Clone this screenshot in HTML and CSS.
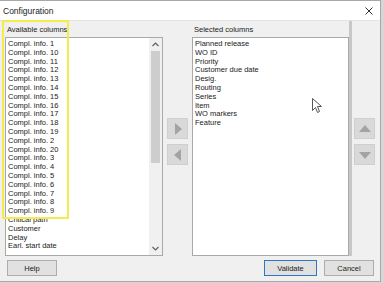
FILE: index.html
```html
<!DOCTYPE html>
<html lang="en">
<head>
    <meta charset="UTF-8">
    <title>Configuration</title>
    <link rel="stylesheet" href="styles.css">
</head>
<body>

<div class="dialog">
    <div class="titlebar">
        <span class="title">Configuration</span>
        <svg class="close" width="8" height="8" viewBox="0 0 8 8"><path d="M0.5 0.5 L7.5 7.5 M7.5 0.5 L0.5 7.5" stroke="#333" stroke-width="1"/></svg>
    </div>

    <div class="content">
        <div class="panes">
            <div class="pane left-pane">
                <div class="label">Available columns</div>
                <div class="listbox">
                    <ul class="items">
                        <li>Compl. info. 1</li>
                        <li>Compl. info. 10</li>
                        <li>Compl. info. 11</li>
                        <li>Compl. info. 12</li>
                        <li>Compl. info. 13</li>
                        <li>Compl. info. 14</li>
                        <li>Compl. info. 15</li>
                        <li>Compl. info. 16</li>
                        <li>Compl. info. 17</li>
                        <li>Compl. info. 18</li>
                        <li>Compl. info. 19</li>
                        <li>Compl. info. 2</li>
                        <li>Compl. info. 20</li>
                        <li>Compl. info. 3</li>
                        <li>Compl. info. 4</li>
                        <li>Compl. info. 5</li>
                        <li>Compl. info. 6</li>
                        <li>Compl. info. 7</li>
                        <li>Compl. info. 8</li>
                        <li>Compl. info. 9</li>
                        <li>Critical path</li>
                        <li>Customer</li>
                        <li>Delay</li>
                        <li>Earl. start date</li>
                    </ul>
                    <div class="scrollbar">
                        <div class="sb-arrow">
                            <svg width="7" height="5" viewBox="0 0 7 5"><path d="M0.5 4 L3.5 1 L6.5 4" fill="none" stroke="#606060" stroke-width="1.2"/></svg>
                        </div>
                        <div class="sb-track"><div class="sb-thumb"></div></div>
                        <div class="sb-arrow">
                            <svg width="7" height="5" viewBox="0 0 7 5"><path d="M0.5 1 L3.5 4 L6.5 1" fill="none" stroke="#606060" stroke-width="1.2"/></svg>
                        </div>
                    </div>
                </div>
                <div class="highlight"></div>
            </div>

            <div class="move-buttons">
                <button class="tool-btn">
                    <svg width="8" height="12" viewBox="0 0 8 12"><path d="M1 0 L8 6 L1 12 Z" fill="#a3a3a3"/></svg>
                </button>
                <button class="tool-btn">
                    <svg width="8" height="12" viewBox="0 0 8 12"><path d="M7 0 L0 6 L7 12 Z" fill="#a3a3a3"/></svg>
                </button>
            </div>

            <div class="pane right-pane">
                <div class="label">Selected columns</div>
                <div class="listbox">
                    <ul class="items">
                        <li>Planned release</li>
                        <li>WO ID</li>
                        <li>Priority</li>
                        <li>Customer due date</li>
                        <li>Desig.</li>
                        <li>Routing</li>
                        <li>Series</li>
                        <li>Item</li>
                        <li>WO markers</li>
                        <li>Feature</li>
                    </ul>
                </div>
                <svg class="cursor" width="11" height="16" viewBox="0 0 11 16">
                    <path d="M0.5 0.5 L0.5 12.5 L3.5 9.5 L5.5 14.5 L7.5 13.5 L5.5 8.5 L9.5 8.5 Z" fill="#ffffff" stroke="#555555" stroke-width="1"/>
                </svg>
            </div>

            <div class="order-buttons">
                <button class="tool-btn">
                    <svg width="12" height="8" viewBox="0 0 12 8"><path d="M0 7 L6 0 L12 7 Z" fill="#a3a3a3"/></svg>
                </button>
                <button class="tool-btn">
                    <svg width="12" height="8" viewBox="0 0 12 8"><path d="M0 1 L6 8 L12 1 Z" fill="#a3a3a3"/></svg>
                </button>
            </div>
        </div>

        <div class="footer">
            <button class="btn">Help</button>
            <div class="footer-right">
                <button class="btn default">Validate</button>
                <button class="btn">Cancel</button>
            </div>
        </div>
    </div>
</div>

</body>
</html>
```

FILE: styles.css
```css
body {
    margin: 0;
    background-color: #d6d6d6;
    font-family: 'Liberation Sans', Arial, sans-serif;
    font-size: 7.5px;
    color: #1a1a1a;
    width: 384px;
    height: 283px;
    overflow: hidden;
}
.dialog {
    width: 380px;
    height: 280px;
    background-color: #f0f0f0;
    border: 1px solid #a8a8a8;
    border-left: none;
    display: flex;
    flex-direction: column;
}
.titlebar {
    height: 19px;
    flex-shrink: 0;
    background: white;
    border-bottom: 1px solid #e4e4e4;
    display: flex;
    align-items: center;
    justify-content: space-between;
    padding: 0 7px 0 3px;
}
.title {
    font-size: 8.5px;
    color: #222;
}
.content {
    flex: 1;
    display: flex;
    flex-direction: column;
    padding: 0 0 0 5px;
}
.panes {
    display: flex;
    height: 235px;
    flex-shrink: 0;
}
.pane {
    display: flex;
    flex-direction: column;
    position: relative;
    flex-shrink: 0;
}
.left-pane {
    width: 158px;
}
.right-pane {
    width: 157px;
}
.label {
    height: 16px;
    line-height: 18px;
    padding-left: 2px;
    color: #222;
}
.listbox {
    flex: 1;
    background: white;
    border: 1px solid #a9a9a9;
    display: flex;
    overflow: hidden;
}
.items {
    list-style: none;
    margin: 0;
    padding: 2px 0 0 2px;
    flex: 1;
    overflow: hidden;
}
.items li {
    height: 8.8px;
    line-height: 8.8px;
    white-space: nowrap;
}
.scrollbar {
    width: 13px;
    background-color: #f0f0f0;
    display: flex;
    flex-direction: column;
}
.sb-arrow {
    height: 13px;
    display: flex;
    align-items: center;
    justify-content: center;
}
.sb-track {
    flex: 1;
    padding: 0 2px;
}
.sb-thumb {
    height: 112px;
    background-color: #cdcdcd;
}
.highlight {
    position: absolute;
    left: -3px;
    top: -1px;
    width: 63px;
    height: 195px;
    border: 2px solid #f3ec4c;
}
.cursor {
    position: absolute;
    left: 120px;
    top: 77px;
}
.move-buttons, .order-buttons {
    display: flex;
    flex-direction: column;
    gap: 5px;
    padding-top: 97px;
    flex-shrink: 0;
}
.move-buttons {
    width: 29px;
    align-items: center;
}
.order-buttons {
    width: 21px;
    padding-left: 2px;
    border-left: 3px solid #c8c8c8;
}
.tool-btn {
    width: 21px;
    height: 21px;
    padding: 0;
    border: 1px solid #cfcfcf;
    background-color: #d9d9d9;
    display: flex;
    align-items: center;
    justify-content: center;
}
.footer {
    display: flex;
    justify-content: space-between;
    align-items: center;
    padding: 4px 6px 0 2px;
}
.footer-right {
    display: flex;
    gap: 7px;
}
.btn {
    font-family: 'Liberation Sans', Arial, sans-serif;
    font-size: 7.5px;
    color: #222;
    width: 50px;
    height: 16px;
    padding: 0;
    background-color: #e1e1e1;
    border: 1px solid #adadad;
}
.btn.default {
    width: 53px;
    border: 1px solid #2f78c0;
}
```
